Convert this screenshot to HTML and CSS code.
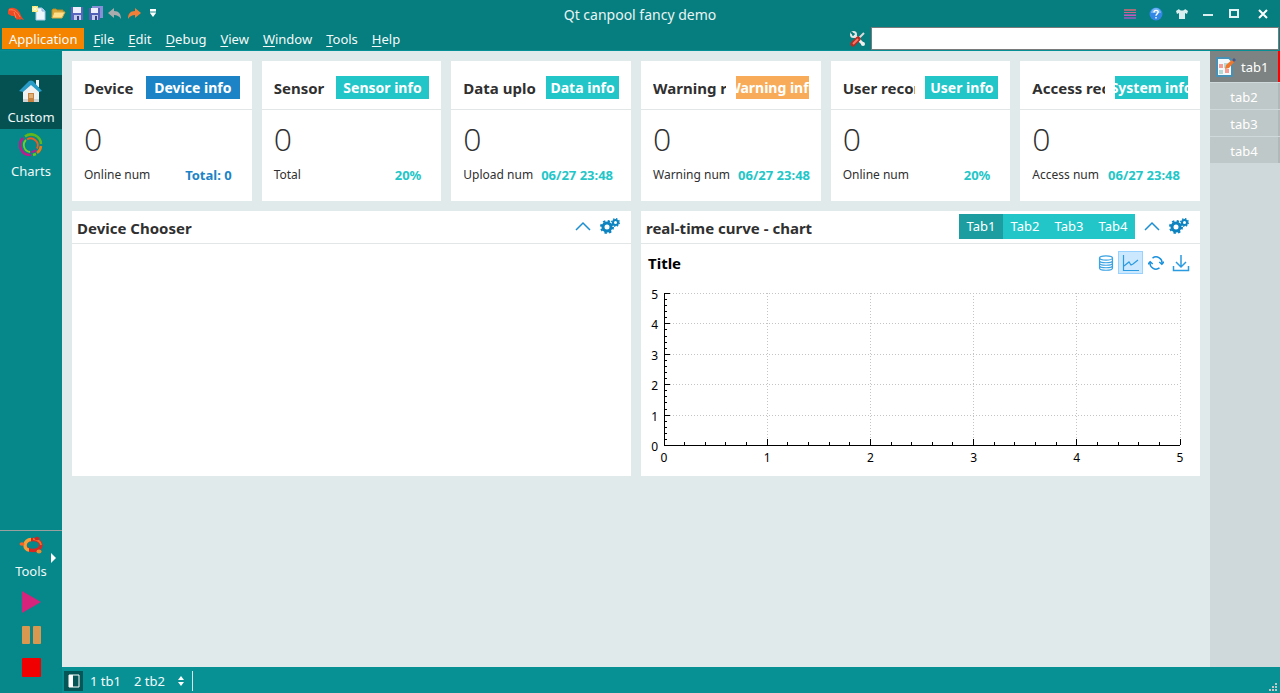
FILE: index.html
```html
<!DOCTYPE html>
<html lang="en">
<head>
<meta charset="utf-8">
<title>Qt canpool fancy demo</title>
<link rel="stylesheet" href="styles.css">
</head>
<body>
<div class="window">
  <header class="titlebar">
    <div class="quickbar">
      <svg class="applogo" viewBox="0 0 18 16" width="18" height="16"><path d="M1 6C1 3 4 2 7 3c4 1 6 4 7 8l3 4-3-1-1 1-2-1-1 1-3-4c-2 0-3 0-4-1L1 9z" fill="#ee4a26"/><path d="M2 5c4-1 8 1 11 7M7 7l2 6" stroke="#ff8350" fill="none"/></svg>
      <button class="quick" aria-label="New"><svg viewBox="0 0 16 16" width="16" height="16"><path d="M5 3h6l3 3v9H5z" fill="#edf5fd" stroke="#aac9ea"/><path d="M11 3v3h3" fill="#bcd6f1" stroke="#8db2db"/><path d="M1 1h6v6H1z" fill="#f7e36b"/><path d="M4 1v6M1 4h6M2 2l4 4M6 2L2 6" stroke="#fffbd8"/></svg></button>
      <button class="quick" aria-label="Open"><svg viewBox="0 0 16 16" width="16" height="16"><path d="M2 13V5l1-1h3l1 1h6v3" fill="#d9a73c" stroke="#b98922"/><path d="M2 13l2-6h11l-3 6z" fill="#ffe08a" stroke="#d8a93e"/></svg></button>
      <button class="quick" aria-label="Save"><svg viewBox="0 0 16 16" width="16" height="16"><path d="M2 2h12v13H2z" fill="#5a65bd"/><path d="M4 2h8v6H4z" fill="#edf0fc"/><path d="M5 10h7v5H5z" fill="#c4cbea"/><path d="M8 11h2v4H8z" fill="#363f8c"/></svg></button>
      <button class="quick" aria-label="Save all"><svg viewBox="0 0 16 16" width="16" height="16"><path d="M4 1h11v12H4z" fill="#8790d6"/><path d="M1 3h11v12H1z" fill="#535eb5"/><path d="M3 3h7v5H3z" fill="#edf0fc"/><path d="M4 10h6v5H4z" fill="#c4cbea"/><path d="M7 11h2v4H7z" fill="#363f8c"/></svg></button>
      <button class="quick" aria-label="Undo"><svg viewBox="0 0 16 16" width="16" height="16"><path d="M1 8l6-5v3c5 0 7 3 7 8-2-3-4-4-7-4v3z" fill="#a9abad"/></svg></button>
      <button class="quick" aria-label="Redo"><svg viewBox="0 0 16 16" width="16" height="16"><path d="M15 8L9 3v3c-5 0-7 3-7 8 2-3 4-4 7-4v3z" fill="#f17f39"/></svg></button>
      <button class="quick" aria-label="Customize quick access"><svg viewBox="0 0 16 16" width="16" height="16"><path d="M5 4h6v2H5zM5 8h6l-3 4z" fill="#fff"/><path d="M5 6h6v2H5z" fill="#8fc4c4"/></svg></button>
    </div>
    <h1 class="title">Qt canpool fancy demo</h1>
    <div class="winbar">
      <button class="win" aria-label="List"><svg viewBox="0 0 14 14" width="14" height="14"><path d="M1 2h12v2H1z" fill="#a56d78"/><path d="M1 5h12v1H1z" fill="#c56a8c"/><path d="M1 8h12v1H1z" fill="#c65bb2"/><path d="M1 7h12v1H1zM1 10h12v2H1z" fill="#7561ad"/></svg></button>
      <button class="win" aria-label="Help"><svg viewBox="0 0 14 14" width="14" height="14"><circle cx="7" cy="7" r="6.5" fill="#3488e5"/><path d="M2 6a5 5 0 0 1 10 0z" fill="#6eb3f4"/><path d="M5 5.5c0-3 4.300-2.700 4.200-.3C9 7 7 6.800 7 8.800M7 10v1.500" fill="none" stroke="#fff" stroke-width="1.400"/></svg></button>
      <button class="win" aria-label="Skin"><svg viewBox="0 0 14 14" width="14" height="14"><path d="M4 2c1 2 5 2 6 0l3 2-1 3-2-1v6H4V6L2 7 1 4z" fill="#d9eeee"/></svg></button>
      <button class="win" aria-label="Minimize"><svg viewBox="0 0 14 14" width="14" height="14"><path d="M2 7h10v2H2z" fill="#d9eeee"/></svg></button>
      <button class="win" aria-label="Maximize"><svg viewBox="0 0 14 14" width="14" height="14"><path d="M3 3h8v7H3z" fill="none" stroke="#e4f3f3" stroke-width="2"/></svg></button>
      <button class="win close" aria-label="Close"><svg viewBox="0 0 14 14" width="14" height="14"><path d="M2 3l8 8M10 3l-8 8" stroke="#fff" stroke-width="2"/></svg></button>
    </div>
  </header>

  <nav class="menubar">
    <button class="app">Application</button>
    <button class="menu"><u>F</u>ile</button>
    <button class="menu"><u>E</u>dit</button>
    <button class="menu"><u>D</u>ebug</button>
    <button class="menu"><u>V</u>iew</button>
    <button class="menu"><u>W</u>indow</button>
    <button class="menu"><u>T</u>ools</button>
    <button class="menu"><u>H</u>elp</button>
    <div class="search">
      <svg viewBox="0 0 16 16" width="16" height="16"><path d="M14 2L8 8" stroke="#dcdcdc" stroke-width="2"/><path d="M4 4l9 9" stroke="#f2eeee" stroke-width="3"/><circle cx="3.500" cy="3.500" r="2.500" fill="none" stroke="#e6e6e6" stroke-width="2"/><path d="M1 1l3 3" stroke="#067d7e" stroke-width="2"/><circle cx="13" cy="13" r="2" fill="#f2eeee"/><path d="M8 8l-5 5" stroke="#b72a20" stroke-width="5" stroke-linecap="round"/><path d="M8 8l-5 5" stroke="#f5776a" stroke-width="2"/></svg>
      <input type="search" class="searchbox" aria-label="Search">
    </div>
  </nav>

  <div class="body">
    <aside class="side">
      <button class="mode active"><svg viewBox="0 0 24 24" width="24" height="24"><path d="M4 12l8-8 8 8v11H4z" fill="#f1f1f1"/><path d="M4 20h16v3H4z" fill="#d4d4d4"/><path d="M17 1h3v7h-3z" fill="#f2f2f2"/><path d="M0 12L10 2q2-1 4 0l9 10-3 1-8-7-8 7z" fill="#289bc7"/><path d="M9 14h6v9H9z" fill="#c68240"/><path d="M10 15h4v4h-4z" fill="#deb078"/></svg><span>Custom</span></button>
      <button class="mode"><svg viewBox="0 0 24 24" width="24" height="24" fill="none" stroke-width="2.500"><path d="M6 3.500a10 10 0 0 1 16 7.500" stroke="#62b81b"/><path d="M22 13a10 10 0 0 1-4 7" stroke="#f07b12"/><path d="M4 5a10 10 0 0 0 8 17" stroke="#c31a8b"/><path d="M14 22l3-1" stroke="#70c818"/><g stroke-width="1.800"><path d="M8 6.500a7 7 0 0 1 10 9" stroke="#f05c20"/><path d="M7 7a7 7 0 0 0 4 12" stroke="#78cf21"/><path d="M12 19a7 7 0 0 0 5-2" stroke="#c31a8b"/></g></svg><span>Charts</span></button>
      <div class="actions">
        <button class="mode tools"><svg viewBox="0 0 24 24" width="24" height="24"><ellipse cx="14" cy="12" rx="8" ry="5.500" fill="none" stroke="#d92821" stroke-width="3.500"/><path d="M6 12c0-3 3-5.500 6-5.500M6 12c0 3 2 5 4 5" fill="none" stroke="#f2a13b" stroke-width="3.500"/><path d="M14 6c4 0 8 3 8 6" fill="none" stroke="#f06b28" stroke-width="2"/><ellipse cx="3" cy="11" rx="2.500" ry="1.800" fill="#f26526"/><ellipse cx="18" cy="5.500" rx="2.500" ry="1.800" fill="#c82824"/><ellipse cx="20" cy="18.500" rx="2.500" ry="2" fill="#f08b2c"/></svg><span>Tools</span><svg class="more" viewBox="0 0 5 10" width="5" height="10"><path d="M0 0l5 5-5 5z" fill="#fff"/></svg></button>
        <button class="act" aria-label="Run"><svg viewBox="0 0 20 22" width="20" height="22"><path d="M1 0l19 11L1 22z" fill="#d6237c"/></svg></button>
        <button class="act" aria-label="Pause"><svg viewBox="0 0 20 20" width="20" height="20"><rect x="1" y="1" width="8" height="18" rx="1" fill="#d9984f"/><rect x="12" y="1" width="8" height="18" rx="1" fill="#d9984f"/></svg></button>
        <button class="act" aria-label="Stop"><svg viewBox="0 0 20 20" width="20" height="20"><rect x="1" y="0" width="19" height="19" rx="1" fill="#f00000"/></svg></button>
      </div>
    </aside>

    <div class="content">
      <div class="workspace">
        <main class="main">
          <section class="cards">
            <article class="card"><div class="card-head"><h2>Device</h2><button class="tag blue">Device info</button></div><div class="card-body"><p class="num">0</p><p class="meta"><span>Online num</span><b class="blue-text">Total: 0</b></p></div></article>
            <article class="card"><div class="card-head"><h2>Sensor</h2><button class="tag">Sensor info</button></div><div class="card-body"><p class="num">0</p><p class="meta"><span>Total</span><b>20%</b></p></div></article>
            <article class="card"><div class="card-head"><h2>Data upload</h2><button class="tag">Data info</button></div><div class="card-body"><p class="num">0</p><p class="meta"><span>Upload num</span><b>06/27 23:48</b></p></div></article>
            <article class="card"><div class="card-head"><h2>Warning record</h2><button class="tag orange">Warning info</button></div><div class="card-body"><p class="num">0</p><p class="meta"><span>Warning num</span><b>06/27 23:48</b></p></div></article>
            <article class="card"><div class="card-head"><h2>User record</h2><button class="tag">User info</button></div><div class="card-body"><p class="num">0</p><p class="meta"><span>Online num</span><b>20%</b></p></div></article>
            <article class="card"><div class="card-head"><h2>Access record</h2><button class="tag">System info</button></div><div class="card-body"><p class="num">0</p><p class="meta"><span>Access num</span><b>06/27 23:48</b></p></div></article>
          </section>
          <section class="panels">
            <article class="panel">
              <div class="panel-head"><h2>Device Chooser</h2>
                <button class="icon" aria-label="Collapse"><svg viewBox="0 0 16 16" width="16" height="16"><path d="M1 12l7-7 7 7" fill="none" stroke="#1b8fd2" stroke-width="1.500"/></svg></button>
                <button class="icon gear" aria-label="Settings"><svg viewBox="0 0 20 16" width="20" height="16" fill="none" stroke="#0d84c0"><circle cx="7" cy="9" r="4" stroke-width="3"/><circle cx="7" cy="9" r="6" stroke-width="2" stroke-dasharray="2.360 2.350"/><circle cx="15.500" cy="4.500" r="2.500" stroke-width="2"/><circle cx="15.500" cy="4.500" r="3.800" stroke-width="1.400" stroke-dasharray="1.490 1.490"/></svg></button>
              </div>
            </article>
            <article class="panel">
              <div class="panel-head"><h2>real-time curve - chart</h2>
                <div class="tabs"><button class="on">Tab1</button><button>Tab2</button><button>Tab3</button><button>Tab4</button></div>
                <button class="icon" aria-label="Collapse"><svg viewBox="0 0 16 16" width="16" height="16"><path d="M1 12l7-7 7 7" fill="none" stroke="#1b8fd2" stroke-width="1.500"/></svg></button>
                <button class="icon gear" aria-label="Settings"><svg viewBox="0 0 20 16" width="20" height="16" fill="none" stroke="#0d84c0"><circle cx="7" cy="9" r="4" stroke-width="3"/><circle cx="7" cy="9" r="6" stroke-width="2" stroke-dasharray="2.360 2.350"/><circle cx="15.500" cy="4.500" r="2.500" stroke-width="2"/><circle cx="15.500" cy="4.500" r="3.800" stroke-width="1.400" stroke-dasharray="1.490 1.490"/></svg></button>
              </div>
              <div class="chart-head"><h3>Title</h3>
                <button class="tool" aria-label="Data"><svg viewBox="0 0 16 16" width="16" height="16" fill="none" stroke="#3ba3e3" stroke-width="1.200"><ellipse cx="8" cy="3" rx="6.500" ry="2.200"/><path d="M1.500 3v10c0 3 13 3 13 0V3M1.500 5.500c0 3 13 3 13 0M1.500 8c0 3 13 3 13 0M1.500 10.500c0 3 13 3 13 0"/></svg></button>
                <button class="tool on" aria-label="Line chart"><svg viewBox="0 0 18 18" width="18" height="18" fill="none" stroke="#2a9be0" stroke-width="1.200"><path d="M1.500 1v15.500H17"/><path d="M2 12l5-4 2 3 2-1 5-4"/></svg></button>
                <button class="tool" aria-label="Refresh"><svg viewBox="0 0 16 16" width="16" height="16" fill="none" stroke="#1890dc" stroke-width="1.500"><path d="M4.500 3.100a6 6 0 0 1 9.400 6M11.500 12.900a6 6 0 0 1-9.400-6"/><path d="M11.300 7l2.500 2.300L16 6.800M0 9.200l2.200-2.500L4.700 9"/></svg></button>
                <button class="tool" aria-label="Download"><svg viewBox="0 0 18 18" width="18" height="18" fill="none" stroke="#2a9be0" stroke-width="1.500"><path d="M9 1v12M4 8l5 5 5-5M1.500 12v4.500h15V12"/></svg></button>
              </div>
              <div class="plot-wrap"><svg class="plot" role="img" aria-label="Empty chart, both axes 0 to 5"></svg></div>
            </article>
          </section>
        </main>
        <aside class="right">
          <button class="rtab active"><svg viewBox="0 0 22 22" width="22" height="22"><path d="M2 2h12l3 3v15H2z" fill="#f4f9fb" stroke="#4691b5" stroke-width="2"/><path d="M4 8h4v4H4zM10 13h4v4h-4z" fill="#f59d95"/><path d="M9 7h4v5H9zM4 14h4v4H4z" fill="#b7dad7"/><path d="M10 13l1-4 7-6 2 2-6 7z" fill="#ef782d"/><path d="M17 4l2-2 2 2-2 2z" fill="#405b91"/></svg><span>tab1</span></button>
          <button class="rtab">tab2</button>
          <button class="rtab">tab3</button>
          <button class="rtab">tab4</button>
        </aside>
      </div>
      <footer class="status">
        <button class="toggle" aria-label="Toggle sidebar"><svg viewBox="0 0 12 14" width="12" height="14"><path d="M1 1h10v12H1z" fill="none" stroke="#fff"/><path d="M1 1h4v12H1z" fill="#fff"/></svg></button>
        <button class="out">1 tb1</button>
        <button class="out">2 tb2</button>
        <button class="updown" aria-label="Choose output pane"><svg viewBox="0 0 6 10" width="6" height="10"><path d="M0 4l3-4 3 4zM0 6h6l-3 4z" fill="#fff"/></svg></button>
        <svg class="grip" viewBox="0 0 8 8" width="8" height="8"><path d="M6 0h2v2H6zM3 3h2v2H3zM6 3h2v2H6zM0 6h2v2H0zM3 6h2v2H3zM6 6h2v2H6z" fill="#c6c6c6"/></svg>
      </footer>
    </div>
  </div>
</div>
<script src="chart.js"></script>
</body>
</html>
```
FILE: styles.css
```css
* { box-sizing: border-box; }
body, h1, h2, h3, p { margin: 0; }
body { font: 13px/18px "Noto Sans", "Open Sans", sans-serif; color: #303030; }
button { margin: 0; padding: 0; border: 0; background: none; color: inherit; font: inherit; white-space: nowrap; }
svg { display: block; flex: none; }
.window { min-height: 100vh; display: flex; flex-direction: column; background: #067d7e; }

.titlebar { height: 27px; display: grid; grid-template-columns: 1fr auto 1fr; align-items: center; color: #e8f4f4; }
.quickbar { display: flex; align-items: center; padding: 0 0 2px 7px; }
.applogo { margin-right: 4px; }
.quick { width: 19px; height: 20px; display: grid; place-items: center; }
.title { font-size: 14px; line-height: 20px; font-weight: 400; padding-top: 2px; }
.winbar { display: flex; justify-content: flex-end; }
.win { width: 26px; height: 26px; display: grid; place-items: center; }
.close { width: 33px; }

.menubar { height: 24px; display: flex; align-items: center; padding: 0 1px 0 2px; color: #f4fafa; border-bottom: 1px solid #069095; }
.app { height: 21px; padding: 0 7px; margin-right: 2px; background: #f58400; }
.menu { padding: 0 7px; }
.menu u { text-underline-offset: 2px; }
.search { margin-left: auto; flex: 0 1 429px; display: flex; align-items: center; gap: 5px; }
.searchbox { flex: 1; min-width: 0; height: 23px; border: 1px solid #7a7a7a; border-radius: 0; background: #fff; padding: 0 4px; font: inherit; outline: 0; }

.body { flex: 1; display: flex; }
.side { width: 62px; flex: none; display: flex; flex-direction: column; padding-top: 24px; background: #068789; color: #f0f8f8; }
.mode { height: 54px; display: flex; flex-direction: column; align-items: center; gap: 5px; padding-top: 4px; position: relative; }
.mode.active { background: #055152; }
.actions { margin-top: auto; border-top: 1px solid #9a9fa0; display: flex; flex-direction: column; padding-bottom: 9px; }
.tools { padding-top: 2px; }
.more { position: absolute; right: 6px; top: 22px; }
.act { height: 33px; display: grid; place-items: center; }

.content { flex: 1; min-width: 0; display: flex; flex-direction: column; }
.workspace { flex: 1; display: flex; }
.main { flex: 1; min-width: 0; padding: 10px; background: #e1eaeb; display: flex; flex-direction: column; gap: 10px; }
.cards { display: grid; grid-template-columns: repeat(6, minmax(0, 1fr)); gap: 10px; }
.card { background: #fff; min-height: 140px; }
.card-head { height: 49px; padding: 5px 12px 0; display: flex; align-items: center; gap: 10px; border-bottom: 1px solid #e3e6e6; }
h2 { font-size: 15px; line-height: 22px; font-weight: 700; white-space: nowrap; overflow: hidden; }
.card-head h2 { flex: none; min-width: 52px; max-width: calc(50% - 5px); }
.tag { flex: 1; min-width: 0; height: 23px; display: flex; align-items: center; justify-content: center; overflow: hidden; background: #23c6c8; color: #fff; font-size: 14px; font-weight: 700; }
.blue { background: #1c84c6; }
.orange { background: #f8ac59; }
.card-body { padding: 9px 20px 0 12px; }
.num { font: 350 32px/40px "Open Sans", "Noto Sans", sans-serif; }
.meta { display: flex; justify-content: space-between; gap: 8px; font-size: 12px; line-height: 18px; padding-top: 7px; white-space: nowrap; }
.meta b { font-size: 13px; color: #23c6c8; }
.meta .blue-text { color: #1c84c6; }

.panels { display: grid; grid-template-columns: repeat(2, minmax(0, 1fr)); gap: 10px; }
.panel { background: #fff; min-height: 265px; }
.panel-head { height: 33px; display: flex; align-items: center; padding: 0 11px 2px 5px; border-bottom: 1px solid #e3e6e6; }
.panel-head h2 { margin-right: auto; padding-top: 4px; }
.icon { margin-left: 9px; }
.tabs { display: flex; background: #23c6c8; color: #fff; }
.tabs button { width: 44px; height: 25px; }
.tabs .on { background: #1d9da0; }
.chart-head { display: flex; align-items: center; padding: 7px 7px 0; }
h3 { font-size: 15px; line-height: 22px; color: #000; margin-right: auto; }
.tool { width: 25px; height: 23px; display: grid; place-items: center; }
.tool.on { background: #cce8ff; border: 1px solid #99d1ff; }
.plot-wrap { padding: 19px 20px 31px 23px; }
.plot { width: 100%; height: 152px; overflow: visible; shape-rendering: crispEdges; }
.plot text { font-size: 12px; fill: #000; }
.grid { stroke: #c4c4c4; stroke-dasharray: 1 2; }
.axis { stroke: #000; }

.right { width: 70px; flex: none; background: #cfd8da; color: #fff; display: flex; flex-direction: column; gap: 1px; }
.rtab { height: 26px; background: #bfc8c8; border-right: 2px solid #b0b9b9; padding-top: 2px; }
.rtab.active { height: 31px; padding: 0 0 0 5px; display: flex; align-items: center; gap: 4px; background: #7d8383; border-right-color: #f00; }

.status { height: 26px; display: flex; align-items: center; padding: 2px 3px 0 2px; background: #079195; color: #f4fafa; }
.toggle { width: 19px; height: 20px; display: grid; place-items: center; background: #055657; }
.out { padding: 0 6px 0 7px; }
.updown { height: 20px; padding: 0 8px 0 7px; border-right: 1px solid #d3e5e5; }
.grip { margin-left: auto; align-self: flex-end; margin-bottom: 2px; }
```
FILE: chart.js
```js
const plot = document.querySelector(".plot");

function add(name, attrs, text) {
  const el = document.createElementNS("http://www.w3.org/2000/svg", name);
  for (const key in attrs) el.setAttribute(key, attrs[key]);
  if (text !== undefined) el.textContent = text;
  plot.append(el);
}

// Grid lines and labels, one for each whole unit of both axes.
const height = 152;
for (let i = 0; i <= 5; i++) {
  const x = i * 20 + "%";
  const y = height - Math.round(i * height / 5);
  if (i > 0) {
    add("line", { class: "grid", x1: x, x2: x, y1: 0, y2: height });
    add("line", { class: "grid", x1: 0, x2: "100%", y1: y, y2: y });
  }
  add("text", { x: x, y: height + 17, "text-anchor": "middle" }, i);
  add("text", { x: -6, y: y + 6, "text-anchor": "end" }, i);
}

// Five small ticks to each unit, with a longer one at the unit itself.
for (let i = 0; i <= 25; i++) {
  const size = i % 5 ? 3 : 6;
  const x = i * 4 + "%";
  const y = height - Math.round(i * height / 25);
  add("line", { class: "axis", x1: x, x2: x, y1: height - size, y2: height });
  add("line", { class: "axis", x1: 0, x2: size, y1: y, y2: y });
}
add("line", { class: "axis", x1: 0, x2: 0, y1: 0, y2: height });
add("line", { class: "axis", x1: 0, x2: "100%", y1: height, y2: height });
```
